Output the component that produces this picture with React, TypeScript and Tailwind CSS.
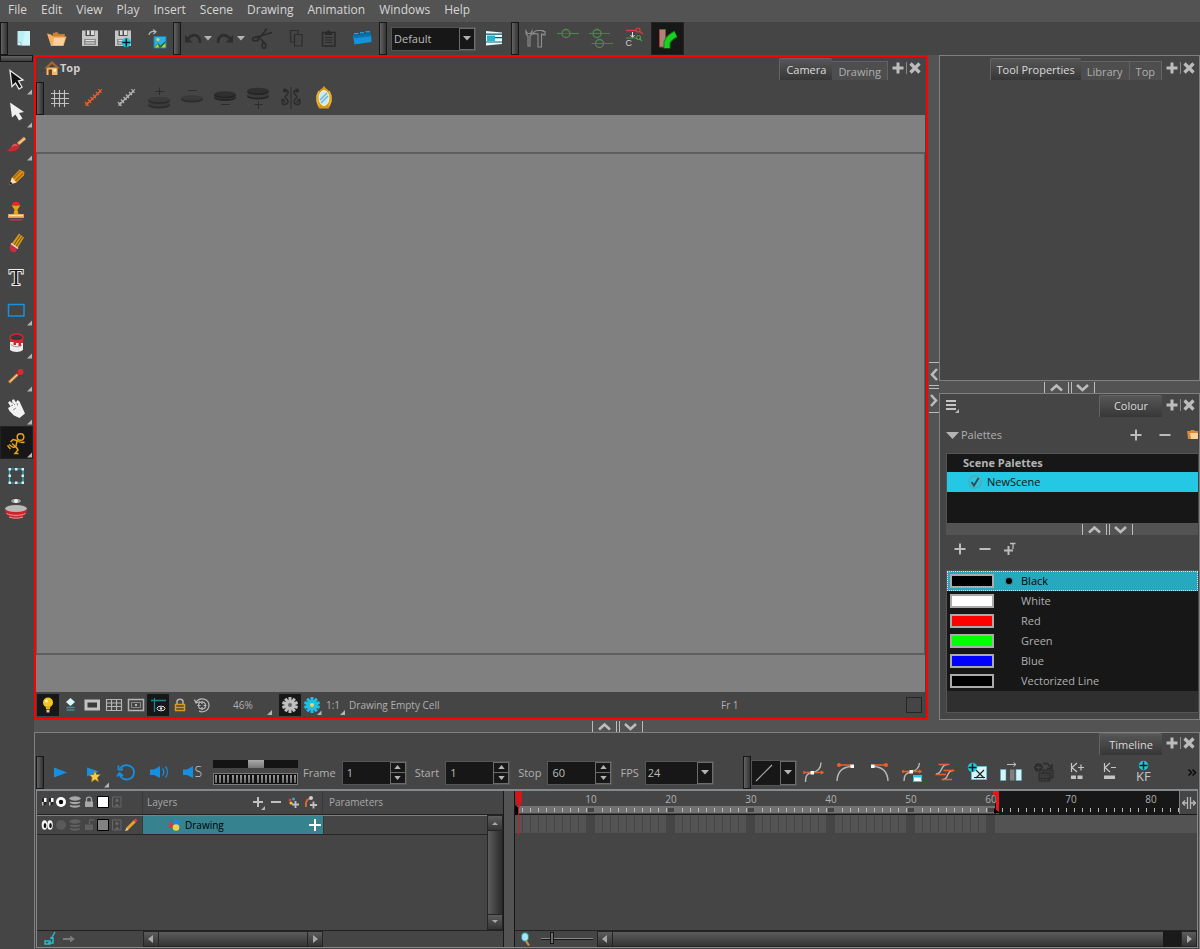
import type { ReactNode } from "react";

type IconDef = { label: string; art: ReactNode; menu?: boolean; active?: boolean };

const MENUS = ["File", "Edit", "View", "Play", "Insert", "Scene", "Drawing", "Animation", "Windows", "Help"];

const COLOURS = [
  { name: "Black", swatch: "bg-black", current: true },
  { name: "White", swatch: "bg-white" },
  { name: "Red", swatch: "bg-[#ff0000]" },
  { name: "Green", swatch: "bg-[#00ff00]" },
  { name: "Blue", swatch: "bg-[#0000ff]" },
  { name: "Vectorized Line", swatch: "bg-black" },
];

const FRAMES = Array.from({ length: 83 }, (_, i) => i + 1);
const LAST_FRAME = 60;

/* ---------- small shared pieces ---------- */

function Grip({ flat = false }: { flat?: boolean }) {
  return flat ? (
    <div className="mb-px h-[7px] w-full shrink-0 border border-[#171717] bg-linear-to-b from-[#636363] to-[#3c3c3c]" />
  ) : (
    <div className="h-[33px] w-2 shrink-0 border border-[#171717] bg-linear-to-r from-[#636363] to-[#343434]" />
  );
}

function ToolButton({ label, art, menu, active }: IconDef) {
  return (
    <button
      type="button"
      aria-label={label}
      title={label}
      className={`size-[33px] shrink-0 ${active ? "border border-[#222222] bg-[#171717]" : ""}`}
    >
      <svg viewBox={active ? "1 1 31 31" : "0 0 33 33"} className="size-full" fill="none">
        {art}
        {menu && <path d="M27 31.5 32 26.5V31.5Z" fill="#b4b4b4" />}
      </svg>
    </button>
  );
}

function StatusButton({ label, art, menu, active }: IconDef) {
  return (
    <button type="button" aria-label={label} className={`size-[22px] shrink-0 ${active ? "bg-[#171717]" : ""}`}>
      <svg viewBox="0 0 22 22" className="size-full" fill="none">
        {art}
        {menu && <path d="M16 21 20.500 16.500V21Z" fill="#b4b4b4" />}
      </svg>
    </button>
  );
}

function Tab({ children, active }: { children: ReactNode; active?: boolean }) {
  return (
    <button
      type="button"
      role="tab"
      aria-selected={!!active}
      className={
        active
          ? "h-[22px] rounded-t-xs border-t border-l border-[#636363] bg-linear-to-b from-[#565656] to-[#373737] px-1.5 text-[11px] text-[#dadada]"
          : "h-[19px] border-t border-r border-[#636363] bg-[#4e4e4e] px-1.5 text-[11px] text-[#b0b0b0]"
      }
    >
      {children}
    </button>
  );
}

function TabControls() {
  return (
    <div className="mb-1 ml-1 flex h-4 items-center gap-0.5">
      <button type="button" aria-label="Add view">
        <svg viewBox="0 0 12 12" className="size-3">
          <path d="M6 .5V11.500M.5 6H11.500" stroke="#bcbcbc" strokeWidth="3" />
        </svg>
      </button>
      <span className="h-3 w-px bg-[#8a8a8a]" />
      <button type="button" aria-label="Close view">
        <svg viewBox="0 0 12 12" className="size-3">
          <path d="M1.500 1.500 10.500 10.500M10.500 1.500 1.500 10.500" stroke="#bcbcbc" strokeWidth="3.200" />
        </svg>
      </button>
    </div>
  );
}

function HSplitter({ className = "" }: { className?: string }) {
  return (
    <div className={`flex shrink-0 items-center justify-center overflow-hidden bg-[#535353] ${className}`}>
      <svg viewBox="0 0 51 11" className="h-[11px] w-[51px]" fill="none" stroke="#bcbcbc">
        <path d="M.5 0V11M24.500 0V11M27.500 0V11M50.500 0V11" strokeWidth="1" />
        <path d="M7 8.500 12.500 3.500 18 8.500M33 3 38.500 8 44 3" strokeWidth="2.600" />
      </svg>
    </div>
  );
}

function VSplitter() {
  return (
    <div className="flex w-[11px] shrink-0 items-center justify-center bg-[#535353]">
      <svg viewBox="0 0 10 51" className="h-[51px] w-[10px]" fill="none" stroke="#bcbcbc">
        <path d="M0 .5H10M0 23.500H10M0 26.500H10M0 50.500H10" strokeWidth="1" />
        <path d="M8 7 3 12.500 8 18M2 33 7 38.500 2 44" strokeWidth="2.600" />
      </svg>
    </div>
  );
}

function Caret() {
  return (
    <svg viewBox="0 0 8 5" className="h-[5px] w-2">
      <path d="M0 0H8L4 4.500Z" fill="#b4b4b4" />
    </svg>
  );
}

function Select({ label, options, width, height, children }: {
  label: string; options: string[]; width: string; height: string; children?: ReactNode;
}) {
  return (
    <div className={`relative shrink-0 border border-[#555555] bg-[#171717] ${width} ${height}`}>
      <select aria-label={label} className="size-full appearance-none bg-transparent pl-0.5 text-[11px] text-[#bcbcbc] outline-none">
        {options.map((o) => (
          <option key={o}>{o}</option>
        ))}
      </select>
      {children}
      <span className="pointer-events-none absolute inset-y-0 right-0 flex w-4 items-center justify-center border border-[#6c6c6c]">
        <Caret />
      </span>
    </div>
  );
}

function Spinner({ label, value, id }: { label: string; value: string; id: string }) {
  return (
    <div className="flex shrink-0 items-center gap-1.5 pr-2">
      <label htmlFor={id} className="text-[11px] text-[#b0b0b0]">{label}</label>
      <div className="flex h-6 w-[65px] border border-[#555555] bg-[#171717]">
        <input id={id} defaultValue={value} className="w-full min-w-0 bg-transparent pl-1 text-[11px] text-[#bcbcbc] outline-none" />
        <div className="flex w-4 shrink-0 flex-col">
          <button type="button" aria-label={`${label} up`} className="flex flex-1 items-center justify-center border border-[#6c6c6c]">
            <svg viewBox="0 0 8 5" className="h-1 w-[7px]"><path d="M0 5H8L4 0Z" fill="#b4b4b4" /></svg>
          </button>
          <button type="button" aria-label={`${label} down`} className="flex flex-1 items-center justify-center border border-t-0 border-[#6c6c6c]">
            <svg viewBox="0 0 8 5" className="h-1 w-[7px]"><path d="M0 0H8L4 5Z" fill="#b4b4b4" /></svg>
          </button>
        </div>
      </div>
    </div>
  );
}

/* ---------- icon artwork ---------- */

const floppy = (
  <g>
    <path d="M8 8.500H24V24H8Z" fill="#c6c6c6" />
    <path d="M11.500 8.500H20.500V14H11.500Z" fill="#4d4d4d" />
    <path d="M13 8.500H15.500V13H13ZM17 8.500H20V13H17Z" fill="#dedede" />
    <path d="M10 17H22V23H10Z" fill="#8d8d8d" />
    <path d="M11.500 18.500H20.500M11.500 21H20.500" stroke="#e2e2e2" strokeWidth="1.200" />
  </g>
);

function CyanPlus({ x, y }: { x: number; y: number }) {
  return (
    <g>
      <circle cx={x} cy={y} r="4.700" fill="#20cbe0" />
      <path d={`M${x - 4} ${y}H${x + 4}M${x} ${y - 4}V${y + 4}`} stroke="#0b1c20" strokeWidth="1.500" />
    </g>
  );
}

const FILE_TOOLS: IconDef[] = [
  {
    label: "New",
    art: (
      <g>
        <path d="M9.500 9H22V23.500H13L9.500 20.500Z" fill="#b9eef5" />
        <path d="M17 9H22V23.500H14Z" fill="#d9f8fb" opacity=".7" />
        <path d="M9.500 20 12.500 20.500 13.500 23.500 9.500 23Z" fill="#eefcff" stroke="#6a98a0" strokeWidth=".6" />
      </g>
    ),
  },
  {
    label: "Open",
    art: (
      <g>
        <path d="M10 22 12 11 16 10 18 12H24L22 23Z" fill="#c97f31" />
        <path d="M6 11.500 10 12.500 12 14.500H25.500L22.500 24H10Z" fill="#f3b062" />
        <path d="M13 16H24L22 23H12Z" fill="#fbd09a" />
      </g>
    ),
  },
  { label: "Save", art: floppy },
  { label: "Save as new version", art: <g>{floppy}<CyanPlus x={19.300} y={20.500} /></g> },
  {
    label: "Import images",
    art: (
      <g>
        <path d="M14 14.500H26V26H14Z" fill="#29b2ea" stroke="#1c7fb4" />
        <path d="M14.500 25.500 18 21 20.500 23.500 25.500 19V25.500Z" fill="#2e6b2b" />
        <path d="M14.500 25.500 18 22 19 25.500ZM21 25.500 25.500 21V25.500Z" fill="#b5d84a" />
        <circle cx="18" cy="17.500" r="1.500" fill="#f4cf3b" />
        <path d="M9 13C9.500 10 12 9 15.500 9.500M13 7.500 16 9.800 13.500 12" stroke="#b8b8b8" strokeWidth="1.200" />
      </g>
    ),
  },
];

const EDIT_TOOLS: IconDef[] = [
  {
    label: "Cut",
    art: (
      <g stroke="#2b2b2b" strokeWidth="1.600">
        <path d="M11 18 20 6.500M8 15.500 25 10.500M14 17 18 22" />
        <ellipse cx="8.500" cy="17" rx="3" ry="1.800" />
        <ellipse cx="17" cy="23.500" rx="1.800" ry="2.800" />
      </g>
    ),
  },
  {
    label: "Copy",
    art: (
      <g stroke="#2c2c2c" strokeWidth="1.200" fill="#444444">
        <path d="M10.500 8.500H18V20H10.500Z" />
        <path d="M14.500 12.500H22V24H14.500Z" />
      </g>
    ),
  },
  {
    label: "Paste",
    art: (
      <g>
        <path d="M9.500 10.500H22V24H9.500Z" stroke="#2a2a2a" strokeWidth="1.500" />
        <path d="M12 11 15.500 8 19 11V13H12Z" fill="#2a2a2a" />
        <path d="M12 15.500H19.500M12 18H19.500M12 20.500H19.500" stroke="#2a2a2a" />
      </g>
    ),
  },
  {
    label: "Plug-ins",
    art: (
      <g>
        <path d="M7 13.500 25 12 25.500 20 8.500 22.500Z" fill="#1095dd" />
        <path d="M7 13.500 25 12 25.200 14.500 7.500 16.500Z" fill="#0b79b8" />
        <path d="M8 11H12.500V14.500H8ZM14 10.500H18V14H14ZM19.500 9.500H24V13.500H19.500Z" fill="#0a6ba6" />
        <path d="M8 11.500H12.500M14 10.700H18M19.500 9.700H24" stroke="#2aa5e8" />
      </g>
    ),
  },
];

const DEFORM_TOOLS: IconDef[] = [
  {
    label: "Rigging tools",
    art: (
      <g stroke="#909090" strokeWidth="1.100">
        <path d="M7 9V12L9 14V24H11V14L13 12V9L11.500 11.500H8.500Z" />
        <path d="M14 12C15 9.500 17 8.500 19 8.500H24V9.500H26V13H24V12H22.500V25H19V12C17 11.500 15.500 11.500 14 12Z" />
      </g>
    ),
  },
  { label: "Add deformation", art: <g stroke="#4d8a4a"><path d="M5 11.500H10M18 11.500H27" /><circle cx="14" cy="11.500" r="4" strokeWidth="1.300" /><path d="M10 11.500H18" opacity=".5" /></g> },
  {
    label: "Add deformation chain",
    art: (
      <g stroke="#4d8a4a">
        <path d="M4 11.500H25M6.500 21.500H28" opacity=".85" />
        <circle cx="12" cy="11.500" r="4" strokeWidth="1.300" />
        <circle cx="14.500" cy="21.500" r="4" strokeWidth="1.300" />
      </g>
    ),
  },
  {
    label: "Copy resting position",
    art: (
      <g>
        <path d="M8 8.500H18M21 9 25 12" stroke="#dc3b3b" strokeWidth="1.300" />
        <circle cx="20" cy="8" r="2" stroke="#dc3b3b" strokeWidth="1.200" />
        <path d="M14.500 10V15M12.500 13 14.500 15.500 16.500 13" stroke="#dedede" />
        <path d="M8 16H18M21.500 16.500 24 19" stroke="#4d9a4a" strokeWidth="1.200" />
        <circle cx="20.500" cy="15.500" r="2" stroke="#4d9a4a" strokeWidth="1.200" />
        <text x="7.500" y="24" fill="#d0d0d0" fontSize="9" fontFamily="Liberation Sans, sans-serif">C</text>
      </g>
    ),
  },
  {
    label: "Show deformed drawing",
    active: true,
    art: (
      <g>
        <path d="M8.500 7.500H14.500V25H8.500Z" fill="#a98480" stroke="#b23a2a" />
        <path d="M16 26.500V20.500C17 17.500 20 14.500 25 12" stroke="#0f8a12" strokeWidth="7" />
        <path d="M16 26V20.500C17 17.500 20 14.500 24.500 12.300" stroke="#1bd022" strokeWidth="5" />
      </g>
    ),
  },
];

function Discs({ ys, dim = true }: { ys: number[]; dim?: boolean }) {
  return (
    <g>
      {ys.map((y, i) => (
        <g key={y}>
          <ellipse cx="16" cy={y + 1.200} rx="11" ry="3.300" fill={dim ? "#2b2b2b" : "#242424"} />
          <ellipse cx="16" cy={y} rx="10.500" ry="2.800" fill={dim || i === 0 ? "#3a3a3a" : "#2f2f2f"} />
        </g>
      ))}
    </g>
  );
}

function RulerArt({ colour }: { colour: string }) {
  return (
    <g stroke={colour}>
      <path d="M9 23 24 8.500" strokeWidth="1.400" />
      <path d="M8 20 11.500 24M11 17.500 14 21M13.500 15 16.500 18M16 12.500 19 16M19 10 22 13M21.500 7 24.500 11" strokeWidth="1.200" />
      <path d="M8.500 24 11 20M21.500 11 25 7" strokeWidth="1" />
    </g>
  );
}

const CAMERA_TOOLS: IconDef[] = [
  { label: "Show grid", art: <path d="M10.500 8V25M15.500 8V25M20.500 8V25M7 11.500H25M7 16.500H25M7 21.500H25" stroke="#c2c2c2" strokeWidth="1.100" /> },
  { label: "Ruler", art: <RulerArt colour="#e8622c" /> },
  { label: "Ruler off", art: <RulerArt colour="#b5b5b5" /> },
  { label: "Previous drawing more", art: <g><Discs ys={[22, 17.500]} /><path d="M16.500 5.500V13M12.500 9.500H20.500" stroke="#2d2d2d" /></g> },
  { label: "Previous drawing less", art: <g><Discs ys={[16]} /><path d="M12 8.500H21" stroke="#2d2d2d" /></g> },
  { label: "Next drawing less", art: <g><Discs ys={[14.500, 12]} dim={false} /><path d="M12 22.500H21" stroke="#2d2d2d" /></g> },
  { label: "Next drawing more", art: <g><Discs ys={[13, 8.500]} dim={false} /><path d="M16.500 19V27M12.500 22.500H20.500" stroke="#2d2d2d" /></g> },
  {
    label: "Flip",
    art: (
      <g stroke="#2b2b2b" strokeWidth="1.600">
        <path d="M16 5V27" strokeWidth="1" />
        <circle cx="10" cy="8.500" r="1.300" fill="#2b2b2b" />
        <circle cx="22" cy="8.500" r="1.300" fill="#2b2b2b" />
        <path d="M10 8.500C14 8 14 11 11 13.500S14 17 13 20 7 24 7 19.500 10 18.500 9.500 20.500M22 8.500C18 8 18 11 21 13.500S18 17 19 20 25 24 25 19.500 22 18.500 22.500 20.500" />
      </g>
    ),
  },
  {
    label: "Mirror view",
    art: (
      <g>
        <path d="M16 4 18 6.500C24 9 24 23 20.500 26.500H11.500C8 23 8 9 14 6.500Z" fill="#d9981a" />
        <path d="M11 9 9 14V19L11 24M21 9 23 14V19L21 24" stroke="#f0b92e" strokeWidth="1.500" />
        <ellipse cx="16" cy="16" rx="5" ry="7.500" fill="#c8ebf6" stroke="#fdf3c7" />
        <path d="M12 18 19 11M13 21 20 14" stroke="#6fb9d8" strokeWidth="1.500" />
      </g>
    ),
  },
];

const TOOLS: IconDef[] = [
  { label: "Select", menu: true, art: <path d="M10 7.500 23 17 18.500 18 22 24 19 26 15.500 20 12 23.500Z" fill="#111111" stroke="#e8e8e8" strokeWidth="1.300" /> },
  { label: "Contour editor", menu: true, art: <path d="M10 6.500 24 16 19 17 22.500 22.500 19 24.500 15.500 18.500 12 21.500Z" fill="#f0f0f0" /> },
  {
    label: "Brush",
    menu: true,
    art: (
      <g>
        <path d="M18 15 25 9" stroke="#e7a55c" strokeWidth="3.200" />
        <path d="M19 14.500 25 9.200" stroke="#fcd7a4" strokeWidth="1" />
        <path d="M6.500 21.500C11 21 10.500 15.500 15 14.500 19 14 21 17.500 18 20 14.500 23 10 23 6.500 21.500Z" fill="#c82a2e" />
        <path d="M12 17.500C13.500 15.500 16 15.500 17 16.500" stroke="#f08080" />
      </g>
    ),
  },
  {
    label: "Pencil",
    art: (
      <g>
        <path d="M9.500 22.500 12 15.500 19.500 7.500 24.500 10 24 13.500 16.500 20.500Z" fill="#d88c14" />
        <path d="M13.500 16 20.500 9M15.500 18.500 23 11.500" stroke="#7d5408" />
        <path d="M9.500 22.500 12 15.500 16.500 20.500Z" fill="#f8dcc0" />
        <path d="M9.500 22.500 10.500 19.500 12.500 21.500Z" fill="#161616" />
      </g>
    ),
  },
  {
    label: "Stamp",
    art: (
      <g>
        <path d="M12 10C12 5.500 20 5.500 20 10Z" fill="#e02b31" />
        <path d="M11.500 10.500H20.500L17.500 14.500 18.500 19H13.500L14.500 14.500Z" fill="#e3a50f" />
        <path d="M8 19H24V23H8Z" fill="#f09a3d" />
        <path d="M9 20.500H23" stroke="#fde2bd" strokeWidth="1.500" />
        <path d="M9.500 24.800H22.500" stroke="#e02b31" strokeWidth="1.500" />
      </g>
    ),
  },
  {
    label: "Eraser",
    art: (
      <g>
        <path d="M11.500 16 19 5.500 24 9.500 17.500 20Z" fill="#d69a1c" />
        <path d="M14 17 20.500 7M16 18.500 22.500 8.500" stroke="#70500c" />
        <path d="M9.500 19 11.500 15.500 17.500 20 15.500 24C12 25 9.500 22.500 9.500 19Z" fill="#cc2d3c" />
        <path d="M11 15.500 18 20.500" stroke="#e6e6e6" strokeWidth="1.500" />
      </g>
    ),
  },
  {
    label: "Text",
    art: (
      <text x="16" y="24" textAnchor="middle" fill="#1a1a1a" stroke="#efefef" strokeWidth="2" paintOrder="stroke" fontSize="23" fontFamily="Liberation Serif, serif">
        T
      </text>
    ),
  },
  { label: "Rectangle", menu: true, art: <path d="M8.500 10.500H24V22H8.500Z" stroke="#1593e0" strokeWidth="1.500" /> },
  {
    label: "Paint",
    menu: true,
    art: (
      <g>
        <path d="M10 11H23V23C20 25.500 13 25.500 10 23Z" fill="#ededed" />
        <ellipse cx="16.500" cy="10.500" rx="6.500" ry="3.500" fill="#393939" stroke="#d52530" strokeWidth="1.500" />
        <path d="M10 11.500C13 14.500 20 14.500 23 11.500V16H21V19H18.500V16H16V18H13.500V15H10Z" fill="#d52530" />
        <path d="M10.500 17C13 20 19 21 22 18" stroke="#9a9a9a" />
      </g>
    ),
  },
  {
    label: "Dropper",
    menu: true,
    art: (
      <g>
        <path d="M9 22.500 19 13" stroke="#d98d3f" strokeWidth="3" />
        <path d="M10 21.500 18 14" stroke="#fbe0bb" />
        <path d="M16.500 12 20.500 16" stroke="#9b1b22" strokeWidth="2" />
        <circle cx="20.500" cy="12" r="3" fill="#d42c33" />
      </g>
    ),
  },
  {
    label: "Hand",
    menu: true,
    art: (
      <g>
        <path d="M8 15 10.500 13.500 8 9.500 10 8 12.500 10.500 12 7 14 6.200 16 9.500 17.500 7 19.500 8.500 22.500 15 25 20.500 19.500 25 14 22.500 9.500 18Z" fill="#f1f1f1" />
        <path d="M11 13 13 12M13.500 10.500 15 12M17 10 17.500 12.500M13 17 16 15" stroke="#8b8b8b" />
      </g>
    ),
  },
  {
    label: "Animate",
    menu: true,
    active: true,
    art: (
      <g stroke="#e8a317" strokeWidth="1.500">
        <circle cx="20.500" cy="11" r="3.300" />
        <path d="M24.500 16C21 17.500 19 16 17 14.500L13 13.500 10.500 16M17 15 16 20C14 22.500 12 21 9 18.500M7.500 19.500 10.500 23M12 17.500 16.500 21.500 18 24 15 27.500H18.500" />
      </g>
    ),
  },
  {
    label: "Transform",
    art: (
      <g>
        <path d="M9.500 10H23V24H9.500Z" stroke="#24bccb" strokeWidth="1.200" />
        <path d="M8.500 9H11V11.500H8.500ZM15 9H17.500V11.500H15ZM21.500 9H24V11.500H21.500ZM8.500 15.500H11V18H8.500ZM21.500 15.500H24V18H21.500ZM8.500 22.500H11V25H8.500ZM15 22.500H17.500V25H15ZM21.500 22.500H24V25H21.500Z" fill="#d8eef0" />
      </g>
    ),
  },
  {
    label: "Onion skin",
    art: (
      <g>
        <ellipse cx="16" cy="9" rx="5.500" ry="2.800" fill="#9a9a9a" stroke="#3a3a3a" />
        <circle cx="16" cy="9" r="2" fill="#eeeeee" />
        <path d="M5 17C5 30 27 30 27 17Z" fill="#c9242c" />
        <path d="M6.500 21.500C11 24 21 24 25.500 21.500M9 25C13 26.500 19 26.500 23 25" stroke="#f19a9a" />
        <ellipse cx="16" cy="16.500" rx="11" ry="3.500" fill="#b9b9b9" />
      </g>
    ),
  },
];

const speaker = <path d="M7 13.500H11L17 10V22L11 19H7Z" fill="#168fe0" />;

const PLAY_TOOLS: IconDef[] = [
  { label: "Play", art: <path d="M10 11.500 23 16.500 10 21.500Z" fill="#168fe0" /> },
  {
    label: "Render and play",
    menu: true,
    art: (
      <g>
        <path d="M10 11.500 22 15.500 10 20.500Z" fill="#168fe0" />
        <path d="M18 14.500 19.500 18.500 23.500 18.500 20.500 21.500 21.500 26 18 23.500 14.500 26 15 21.500 12.500 18.800 16.500 18.500Z" fill="#f6cd48" stroke="#a06a10" strokeWidth=".6" />
      </g>
    ),
  },
  { label: "Loop", art: <path d="M10.500 12C15 6.500 24 9.500 24 16.500 23.500 25 12 26 9.500 18M8.500 9.500V13.500H13M7 20.500 9.500 17 13 20" stroke="#168fe0" strokeWidth="1.800" /> },
  { label: "Sound", art: <g>{speaker}<path d="M19.500 12.500C21 14.500 21 17.500 19.500 19.500M22.500 10.500C25 14 25 18.500 22.500 21.500" stroke="#168fe0" strokeWidth="1.300" /></g> },
  { label: "Sound scrubbing", art: <g>{speaker}<text x="18.500" y="21" fill="#c8c8c8" fontSize="14" fontWeight="300" fontFamily="Open Sans, sans-serif">S</text></g> },
];

const KEY_TOOLS: IconDef[] = [
  {
    label: "Ease",
    art: (
      <g>
        <path d="M8.500 26C8.500 20 9.500 17.500 15 16.500S24 12 24 6.500" stroke="#b8b8b8" strokeWidth="1.400" />
        <path d="M6.500 16.500H26M7 15V18M24 15 26 16.500 24 18" stroke="#e8622c" strokeWidth="1.400" />
        <path d="M13.500 15H17V18.500H13.500Z" fill="#ffffff" />
      </g>
    ),
  },
  {
    label: "Ease in",
    art: (
      <g>
        <path d="M7 25C7.500 16 12 11 21 10.500" stroke="#b8b8b8" strokeWidth="1.400" />
        <path d="M9 9H21" stroke="#e8622c" strokeWidth="1.500" />
        <circle cx="9" cy="9" r="2" fill="#e8622c" />
        <path d="M20.500 8.500H24V12H20.500Z" fill="#ffffff" />
      </g>
    ),
  },
  {
    label: "Ease out",
    art: (
      <g>
        <path d="M25 25C24.500 16 20 11 11 10.500" stroke="#b8b8b8" strokeWidth="1.400" />
        <path d="M11 9H23" stroke="#e8622c" strokeWidth="1.500" />
        <circle cx="23" cy="9" r="2" fill="#e8622c" />
        <path d="M8 8.500H11.500V12H8Z" fill="#ffffff" />
      </g>
    ),
  },
  {
    label: "Set ease",
    art: (
      <g>
        <path d="M8 25C8 19 10 17 15 16S23 12 23.500 7" stroke="#b8b8b8" strokeWidth="1.400" />
        <path d="M6 15.500H25M7 14V17M23 14 25 15.500 23 17" stroke="#e8622c" strokeWidth="1.400" />
        <path d="M13.500 14H17V17.500H13.500Z" fill="#ffffff" />
        <path d="M17 19H26V26H17Z" fill="#20cbe0" />
        <path d="M18 21.500H25V25H18Z" fill="#ffffff" />
      </g>
    ),
  },
  {
    label: "Flatten",
    art: (
      <g>
        <path d="M7 18C14 18 11 8.500 18 8.500M14 23.500C20 23.500 17 14.500 24 14.500" stroke="#b8b8b8" strokeWidth="1.400" />
        <path d="M9.500 8.500H20.500M14.500 14.500H25.500M6.500 18.500H17M12.500 23.500H23" stroke="#e8622c" strokeWidth="1.400" />
      </g>
    ),
  },
  {
    label: "Add keyframe exposure",
    art: (
      <g>
        <path d="M9.500 10.500H24.500V23.500H9.500Z" fill="#d6f5fa" stroke="#6fc0cf" />
        <path d="M14 14 22 22M22 14 14 22M12 21.500H23" stroke="#222222" strokeWidth="1.200" />
        <CyanPlus x={10.500} y={11.500} />
      </g>
    ),
  },
  {
    label: "Stretch exposure",
    art: (
      <g>
        <path d="M12 8.500H21M18.500 6.500 21 8.500 18.500 10.500" stroke="#c0c0c0" />
        <path d="M5.500 13.500H11V24.500H5.500Z" fill="#d6f5fa" stroke="#5fb0bf" strokeWidth=".7" />
        <path d="M11.500 13.500H15V24.500H11.500Z" fill="#4a4a4a" />
        <path d="M15 13.500H19.500V24.500H15Z" fill="#808080" />
        <path d="M21 13.500H26.500V24.500H21Z" fill="#d6f5fa" stroke="#5fb0bf" strokeWidth=".7" />
      </g>
    ),
  },
  {
    label: "Duplicate drawing",
    art: (
      <g>
        <path d="M15 14H25V22H15Z" fill="#3b3b3b" stroke="#2b2b2b" />
        <path d="M11 17H22V25H11Z" fill="#3b3b3b" stroke="#2b2b2b" />
        <path d="M13 22.500H21" stroke="#222222" strokeDasharray="2 1" />
        <circle cx="10.500" cy="11.500" r="4.300" fill="#2c2c2c" />
        <path d="M8 11.500H13M10.500 9V14" stroke="#444444" />
        <path d="M15 7.500H19L24 12M24 8V12.500H19" stroke="#2b2b2b" strokeWidth="1.500" />
      </g>
    ),
  },
  {
    label: "Add keyframe",
    art: (
      <g>
        <path d="M10.500 7V16M16 7 11 11.500 16 16M17 11.500H23M20 8.500V14.500" stroke="#c4c4c4" strokeWidth="1.200" />
        <path d="M10 19.500H15V23H10ZM16.500 19.500H21.500V23H16.500Z" fill="#c4c4c4" />
      </g>
    ),
  },
  {
    label: "Delete keyframe",
    art: (
      <g>
        <path d="M10.500 7V16M16 7 11 11.500 16 16M17 11.500H22" stroke="#c4c4c4" strokeWidth="1.200" />
        <path d="M10 19.500H21V23H10Z" fill="#c4c4c4" />
      </g>
    ),
  },
  {
    label: "Keyframe mode",
    art: (
      <g>
        <text x="9" y="25" fill="#c4c4c4" fontSize="13" fontFamily="Open Sans, sans-serif">KF</text>
        <CyanPlus x={16.500} y={9.500} />
      </g>
    ),
  },
];

function Gear({ colour, centre }: { colour: string; centre: string }) {
  return (
    <g>
      <circle cx="11" cy="11" r="5" fill={colour} />
      {[0, 36, 72, 108, 144].map((a) => (
        <path key={a} d="M11 3V19" stroke={colour} strokeWidth="3" transform={`rotate(${a} 11 11)`} />
      ))}
      <circle cx="11" cy="11" r="2" fill={centre} />
    </g>
  );
}

const STATUS_LEFT: IconDef[] = [
  {
    label: "Light table",
    active: true,
    art: (
      <g>
        <circle cx="11" cy="8.500" r="5" fill="#f5c71e" />
        <path d="M8.500 12H13.500L12.800 15.500H9.200Z" fill="#e8b010" />
        <circle cx="9.500" cy="7" r="1.500" fill="#fff3b0" />
        <path d="M9.500 16H12.500V18.500H9.500Z" fill="#c9c9c9" />
      </g>
    ),
  },
  { label: "Auto light table", art: <g><path d="M11.500 4 16 8 11.500 12 7 8Z" fill="#d8f3fa" /><path d="M7.500 13.500H15.500M7.500 16H15.500" stroke="#4a8a96" strokeWidth="1.300" /></g> },
  { label: "Camera mask", art: <g><path d="M3.500 5.500H19V16.500H3.500Z" fill="#c2c2c2" /><path d="M6.500 8.500H16V13.500H6.500Z" fill="#3a3a3a" /></g> },
  { label: "Outline grid", art: <path d="M3.500 5.500H18.500V16.500H3.500ZM3.500 9H18.500M3.500 12.500H18.500M8.500 5.500V16.500M13.500 5.500V16.500" stroke="#b4b4b4" strokeWidth="1.200" /> },
  { label: "Safe area", art: <g stroke="#b4b4b4"><path d="M3.500 5.500H18.500V16.500H3.500Z" strokeWidth="1.500" /><path d="M6.500 8.500H15.500V13.500H6.500Z" stroke="#8a8a8a" /><path d="M10 11H12" strokeWidth="2" /></g> },
  {
    label: "Show current",
    active: true,
    art: (
      <g>
        <path d="M7.500 4V18M4 6.500H19" stroke="#1e8492" strokeWidth="1.300" />
        <ellipse cx="14" cy="14.500" rx="4" ry="2.300" stroke="#d8d8d8" />
        <circle cx="14" cy="14.500" r="1.300" fill="#d8d8d8" />
      </g>
    ),
  },
  { label: "Lock", art: <g><path d="M8 11V7.500C8 4.500 14 4.500 14 7.500V11" stroke="#b4b4b4" strokeWidth="1.500" /><path d="M6.500 10.500H15.500V16.500H6.500ZM6.500 13.500H15.500" stroke="#d99a17" strokeWidth="1.500" /></g> },
  {
    label: "Reset rotation",
    art: (
      <g stroke="#b8b8b8" strokeWidth="1.200">
        <path d="M5 8C9 2.500 18 4.500 18 11.500 17.500 17 12 19 8 17" />
        <path d="M3.500 5.500 5 9 9 7.500" />
        <circle cx="11" cy="11.500" r="3.500" />
        <path d="M11 7V10M11 13V16M6.500 11.500H9.500M12.500 11.500H15.500" />
      </g>
    ),
  },
];

/* Column glyphs shared by the layer header and each layer row. */
function LayerIcons({ on }: { on: boolean }) {
  const c = on ? "#a8a8a8" : "#606060";
  return (
    <svg viewBox="0 0 100 18" className="h-[18px] w-[100px]" fill="none">
      {on ? (
        <g>
          <path d="M2 6.500C2 4.500 6 4.500 6.500 6.500V9C6 12 3 14 2 12ZM9 6.500C9 4.500 13 4.500 13.500 6.500V9C13 12 10 14 9 12Z" fill="#222222" />
          <path d="M4 5H6.500V9H4ZM11 5H13.500V9H11Z" fill="#ffffff" />
          <path d="M2 9H3.500V12.500H2ZM9 9H10.500V12.500H9Z" fill="#c8c8c8" />
          <circle cx="21" cy="9" r="5" fill="#ffffff" />
          <circle cx="21" cy="9" r="2.200" fill="#0a0a0a" />
        </g>
      ) : (
        <g>
          <ellipse cx="4.500" cy="9" rx="2.800" ry="4.800" fill="#f4f4f4" />
          <ellipse cx="10" cy="9" rx="2.800" ry="4.800" fill="#f4f4f4" />
          <ellipse cx="5" cy="9.500" rx="1.300" ry="2.600" fill="#111111" />
          <ellipse cx="10.500" cy="9.500" rx="1.300" ry="2.600" fill="#111111" />
          <circle cx="21" cy="9" r="5" fill="#5a5a5a" />
        </g>
      )}
      <path d="M30 5.500C32 7.500 38 7.500 40 5.500 38 3.500 32 3.500 30 5.500ZM30 9C32 11 38 11 40 9M30 12.500C32 14.500 38 14.500 40 12.500" fill={c} stroke={c} strokeWidth="1.500" />
      <path d="M45 8.500H53V14H45Z" fill={c} />
      <path d={on ? "M46.500 9V6C46.500 3.500 51.500 3.500 51.500 6V9" : "M49.500 8.500V5C49.500 3 53.500 3 53.500 5"} stroke={c} strokeWidth="1.300" />
      <path d="M57.500 3.500H68.500V14.500H57.500Z" fill={on ? "#ffffff" : "#828282"} stroke="#000000" />
      <path d="M72.500 4H81V14H72.500Z" stroke="#666666" />
      <path d="M75 13.500C75 10 79 10 79 13.500Z" fill="#666666" />
      <circle cx="77" cy="7.500" r="1.700" fill="#666666" />
      {!on && (
        <g>
          <path d="M87 13 95 5" stroke="#e9a22b" strokeWidth="3" />
          <path d="M94.500 5.500 96.500 3.500" stroke="#d94040" strokeWidth="3" />
          <path d="M85 15 86.500 12 88.500 14Z" fill="#f2e0c8" />
        </g>
      )}
    </svg>
  );
}

/* ---------- panels ---------- */

function MenuBar() {
  return (
    <nav className="flex h-[22px] shrink-0 items-center gap-3.5 bg-[#535353] px-2 pb-0.5 text-xs text-[#d6d6d6]">
      {MENUS.map((m) => (
        <button key={m} type="button">{m}</button>
      ))}
    </nav>
  );
}

function History({ label, flip }: { label: string; flip?: boolean }) {
  return (
    <div className="flex shrink-0 items-center">
      <button type="button" aria-label={label}>
        <svg viewBox="0 0 23 33" className="h-[33px] w-[23px]" fill="none">
          <path d={flip ? "M19 13V20.500H11.500Z" : "M4 13V20.500H11.500Z"} fill="#2d2d2d" />
          <path d={flip ? "M4 21C4 13 10 10.500 16 16.500" : "M19 21C19 13 13 10.500 7 16.500"} stroke="#2d2d2d" strokeWidth="2.600" />
        </svg>
      </button>
      <button type="button" aria-label={`${label} history`} className="w-[10px]"><Caret /></button>
    </div>
  );
}

function MainToolbar() {
  return (
    <div className="flex h-[33px] shrink-0 items-center">
      <Grip />
      {FILE_TOOLS.map((t) => <ToolButton key={t.label} {...t} />)}
      <Grip />
      <History label="Undo" />
      <History label="Redo" flip />
      {EDIT_TOOLS.map((t) => <ToolButton key={t.label} {...t} />)}
      <Grip />
      <div className="pr-0.5 pl-1">
        <Select label="Workspace" options={["Default"]} width="w-[85px]" height="h-6" />
      </div>
      <ToolButton
        label="Workspace manager"
        art={
          <g>
            <path d="M8 9 24 10.500V22L8 23.500Z" fill="#e8fbff" />
            <path d="M9 13.500H17V19H9Z" fill="#20b8d0" />
            <path d="M8 12.200H24M17 15.700H24M8 20H24" stroke="#125a68" strokeWidth="1.200" />
          </g>
        }
      />
      <Grip />
      {DEFORM_TOOLS.map((t) => <ToolButton key={t.label} {...t} />)}
    </div>
  );
}

function Toolbox() {
  return (
    <aside className="flex w-[34px] shrink-0 flex-col pr-px">
      <Grip flat />
      {TOOLS.map((t) => <ToolButton key={t.label} {...t} />)}
    </aside>
  );
}

function CameraView() {
  return (
    <section className="flex min-w-0 flex-1 flex-col border-2 border-[#ff0000] bg-[#454545]">
      <header className="flex h-[25px] shrink-0 justify-between">
        <div className="flex items-center pb-1 pl-2 text-[11px] font-bold text-[#cfcfcf]">
          <svg viewBox="0 0 16 16" className="size-4">
            <path d="M2.500 7.500H13.500V15H2.500Z" fill="#f6b76e" />
            <path d="M0 8.500 8 1 16 8.500H13L8 4 3 8.500Z" fill="#a3682a" />
            <path d="M4.500 9.500H8V15H4.500Z" fill="#6b4216" />
            <path d="M9.500 9H12V11.500H9.500Z" fill="#fff0d8" />
          </svg>
          Top
        </div>
        <div className="flex h-[23px] items-end pr-[5px]" role="tablist">
          <Tab active>Camera</Tab>
          <Tab>Drawing</Tab>
          <TabControls />
        </div>
      </header>
      <div className="flex h-[33px] shrink-0">
        <Grip />
        {CAMERA_TOOLS.map((t) => <ToolButton key={t.label} {...t} />)}
      </div>
      <div className="mr-px flex min-h-0 flex-1 flex-col bg-[#808080] py-[37px]">
        <div className="flex-1 border-x border-y-2 border-[#5e5e5e]" />
      </div>
      <footer className="flex h-[26px] shrink-0 items-center pl-px text-[10px] text-[#b0b0b0]">
        {STATUS_LEFT.map((t) => <StatusButton key={t.label} {...t} />)}
        <button type="button" className="flex h-[22px] w-[66px] items-center justify-between pr-[7px] pl-5">
          46%
          <svg viewBox="0 0 5 22" className="h-[22px] w-[5px]"><path d="M0 21 5 16V21Z" fill="#b4b4b4" /></svg>
        </button>
        <StatusButton label="OpenGL view" active art={<Gear colour="#c0c0c0" centre="#6a6a6a" />} />
        <StatusButton label="Render view" menu art={<Gear colour="#20bfe4" centre="#f6d64a" />} />
        <button type="button" className="flex h-[22px] items-center pl-[3px]">
          1:1
          <svg viewBox="0 0 5 22" className="h-[22px] w-[5px]"><path d="M0 21 5 16V21Z" fill="#b4b4b4" /></svg>
        </button>
        <span className="pl-1">Drawing Empty Cell</span>
        <span className="ml-auto w-[185px]">Fr 1</span>
        <span className="mr-1 size-4 border border-[#252525]" />
      </footer>
    </section>
  );
}

function ToolProperties() {
  return (
    <section className="h-[326px] shrink-0 border border-[#808080] bg-[#454545]">
      <div className="flex h-6 items-end justify-end pr-1" role="tablist">
        <Tab active>Tool Properties</Tab>
        <Tab>Library</Tab>
        <Tab>Top</Tab>
        <TabControls />
      </div>
    </section>
  );
}

function Plus() {
  return (
    <svg viewBox="0 0 12 12" className="size-3"><path d="M6 .5V11.500M.5 6H11.500" stroke="#bcbcbc" strokeWidth="2" /></svg>
  );
}

function Minus() {
  return (
    <svg viewBox="0 0 12 12" className="size-3"><path d="M.5 6H11.500" stroke="#bcbcbc" strokeWidth="2" /></svg>
  );
}

function ColourView() {
  return (
    <section className="flex min-h-0 flex-1 flex-col border border-[#808080] bg-[#454545] text-xs">
      <header className="flex h-[23px] shrink-0 items-center justify-between pr-1 pl-1.5">
        <button type="button" aria-label="View menu">
          <svg viewBox="0 0 14 16" className="h-4 w-[14px]">
            <path d="M0 3H10M0 7H10M0 11H10" stroke="#c4c4c4" strokeWidth="2" />
            <path d="M9 15 13 11V15Z" fill="#b4b4b4" />
          </svg>
        </button>
        <div className="flex h-[22px] items-end" role="tablist">
          <div className="flex w-[63px] flex-col"><Tab active>Colour</Tab></div>
          <TabControls />
        </div>
      </header>
      <div className="flex h-9 shrink-0 items-center overflow-hidden pl-1.5 text-[11px] text-[#b0b0b0]">
        <svg viewBox="0 0 13 7" className="mr-0.5 h-[7px] w-[13px]"><path d="M0 0H13L6.500 7Z" fill="#b4b4b4" /></svg>
        Palettes
        <button type="button" aria-label="Add palette" className="mr-[17px] ml-auto"><Plus /></button>
        <button type="button" aria-label="Remove palette" className="mr-4"><Minus /></button>
        <button type="button" aria-label="Import palette" className="mr-px">
          <svg viewBox="0 0 11 10" className="h-[10px] w-[11px]">
            <path d="M0 1H3L4 0H7L8 1H11V9H1Z" fill="#d08a3c" />
            <path d="M3 3H11V9H4Z" fill="#fbcf98" />
          </svg>
        </button>
      </div>
      <ul className="mr-px ml-1.5 h-[71px] shrink-0 border border-r-0 border-[#555555] bg-[#171717]">
        <li className="flex h-[18px] items-center pl-4 text-[11px] font-bold text-[#b4b4b4]">Scene Palettes</li>
        <li className="flex h-5 items-center bg-[#24c8e4] pl-5 text-[11px] text-[#101010]">
          <svg viewBox="0 0 16 16" className="mr-1 size-4" fill="none">
            <circle cx="8" cy="8" r="6" stroke="#5fa3b0" strokeWidth="1.500" />
            <path d="M4.500 8 7 11.500 11.500 4" stroke="#2c4a50" strokeWidth="1.800" />
          </svg>
          NewScene
        </li>
      </ul>
      <HSplitter className="mr-px ml-1.5 h-[11px] pl-[71px]" />
      <div className="flex h-[35px] shrink-0 items-center gap-[13px] pb-2 pl-3.5">
        <button type="button" aria-label="Add colour"><Plus /></button>
        <button type="button" aria-label="Remove colour"><Minus /></button>
        <button type="button" aria-label="Add texture">
          <svg viewBox="0 0 12 14" className="h-[14px] w-3" fill="none" stroke="#bcbcbc">
            <path d="M4.500 4V13M0 8.500H9" strokeWidth="2" />
            <path d="M6 1.500H11.500M9 1.500V7" strokeWidth="1.300" />
          </svg>
        </button>
      </div>
      <div className="mr-px mb-1.5 ml-1.5 min-h-0 flex-1 overflow-hidden border border-r-0 border-[#555555] bg-[#2f2f2f]">
        <table className="w-full border-collapse text-left">
          <tbody>
            {COLOURS.map((c) => (
              <tr
                key={c.name}
                className={`h-5 ${c.current ? "bg-[#26a9bf] text-black outline-1 -outline-offset-1 outline-dotted outline-[#cfe8ec]" : "bg-[#171717] text-[#b0b0b0]"}`}
              >
                <td className="w-[59px] p-0 pl-[3px]"><div className={`h-[14px] w-11 border-2 border-[#aaaaaa] ${c.swatch}`} /></td>
                <td className="w-[15px] p-0">{c.current && <div className="size-1.5 rounded-full bg-black ring-1 ring-[#4b7d86]" />}</td>
                <td className="p-0 text-[11px]">{c.name}</td>
              </tr>
            ))}
          </tbody>
        </table>
      </div>
    </section>
  );
}

function TimelineToolbar() {
  return (
    <div className="flex h-[33px] shrink-0 items-center overflow-hidden pl-px">
      <Grip />
      {PLAY_TOOLS.map((t) => <ToolButton key={t.label} {...t} />)}
      <div className="mr-[5px] ml-1 flex w-[85px] shrink-0 flex-col gap-[5px]">
        <div className="flex h-2 justify-center bg-[#141414]"><span className="w-4 bg-linear-to-b from-[#aaaaaa] to-[#777777]" /></div>
        <div className="flex h-3 justify-between border border-[#7b7b7b] bg-[#111111] px-px py-px">
          {Array.from({ length: 20 }, (_, i) => <span key={i} className="w-0.5 bg-linear-to-b from-[#9a9a9a] to-[#666666]" />)}
        </div>
      </div>
      <Spinner label="Frame" value="1" id="frame" />
      <Spinner label="Start" value="1" id="start" />
      <Spinner label="Stop" value="60" id="stop" />
      <span className="mr-1.5 shrink-0 text-[11px] text-[#b0b0b0]">FPS</span>
      <Select label="FPS" options={["24"]} width="w-[69px]" height="h-6" />
      <div className="grow" />
      <Grip />
      <Select label="Tween" options={[""]} width="w-[46px]" height="h-[26px]">
        <svg viewBox="0 0 26 24" className="pointer-events-none absolute top-0 left-0 h-6 w-[26px]"><path d="M4 20 20 4" stroke="#a8a8a8" strokeWidth="1.200" /></svg>
      </Select>
      {KEY_TOOLS.map((t) => <ToolButton key={t.label} {...t} />)}
      <button type="button" aria-label="More tools" className="flex w-[39px] shrink-0 justify-end pr-0.5">
        <svg viewBox="0 0 9 7" className="h-[7px] w-[9px]" fill="none"><path d="M.5 .5 3.500 3.500 .5 6.500M4.500 .5 7.500 3.500 4.500 6.500" stroke="#0c0c0c" strokeWidth="1.500" /></svg>
      </button>
    </div>
  );
}

function ScrollArrow({ dir }: { dir: "left" | "right" | "up" | "down" }) {
  const d = { left: "M6 0V8L1 4Z", right: "M2 0V8L7 4Z", up: "M1 6H7L4 3Z", down: "M1 2H7L4 5Z" }[dir];
  return (
    <button type="button" aria-label={`Scroll ${dir}`} className="flex size-4 shrink-0 items-center justify-center border border-[#252525] bg-linear-to-b from-[#5c5c5c] to-[#353535]">
      <svg viewBox="0 0 8 8" className="size-2"><path d={d} fill="#a8a8a8" /></svg>
    </button>
  );
}

function LayersPane() {
  return (
    <div className="flex w-[466px] shrink-0 flex-col">
      <div className="flex h-6 shrink-0 border-b border-[#222222] text-[10px] text-[#a8a8a8]">
        <div className="flex w-[106px] items-center border-r border-[#393939] pb-px pl-[3px]"><LayerIcons on /></div>
        <div className="flex w-[180px] items-center justify-between border-r border-[#393939] px-1 pb-px">
          Layers
          <svg viewBox="0 0 68 16" className="h-4 w-[68px]" fill="none">
            <path d="M8 3V13M3 8H13M21 8H31" stroke="#c0c0c0" strokeWidth="2" />
            <path d="M11 16 15 12V16Z" fill="#b4b4b4" />
            <circle cx="40" cy="6" r="1.500" fill="#d94040" />
            <circle cx="43.500" cy="5" r="1.500" fill="#36a8e0" />
            <circle cx="41" cy="9" r="1.500" fill="#f0c83a" />
            <path d="M45.500 7V14M42 10.500H49" stroke="#c0c0c0" strokeWidth="1.800" />
            <path d="M56 13C55 7 58 4 62 4" stroke="#d96a35" strokeWidth="1.800" />
            <circle cx="61" cy="4" r="2" fill="#d0d0d0" />
            <path d="M63.500 7.500V14.500M60 11H67" stroke="#c0c0c0" strokeWidth="1.800" />
          </svg>
        </div>
        <div className="flex items-center pb-px pl-[6px]">Parameters</div>
      </div>
      <div className="flex min-h-0 flex-1 border-b border-[#222222]">
        <div className="min-w-0 flex-1">
          <div className="flex h-5 border-y border-t-[#808080] border-b-[#262626]">
            <div className="flex w-[106px] items-center border-r border-[#393939] pl-[3px]"><LayerIcons on={false} /></div>
            <div className="flex w-[180px] items-center bg-[#37828f] pr-0.5 pl-6 text-[10px] text-black">
              <svg viewBox="0 0 14 12" className="mr-1 h-3 w-[14px]">
                <path d="M7 1H13V7H7Z" fill="#1f86d8" />
                <path d="M4 2 8 9H1Z" fill="#dc3545" />
                <circle cx="9" cy="8.500" r="3.300" fill="#f5cf45" />
              </svg>
              Drawing
              <button type="button" aria-label="Expand layer" className="ml-auto">
                <svg viewBox="0 0 12 12" className="size-3"><path d="M6 0V12M0 6H12" stroke="#ffffff" strokeWidth="2" /></svg>
              </button>
            </div>
            <div className="flex-1 border-l border-[#393939]" />
          </div>
        </div>
        <div className="flex w-4 flex-col">
          <ScrollArrow dir="up" />
          <div className="flex-1 border-x border-[#252525] bg-linear-to-r from-[#5c5c5c] to-[#2c2c2c]" />
          <ScrollArrow dir="down" />
        </div>
      </div>
      <div className="flex h-4 shrink-0">
        <svg viewBox="0 0 106 16" className="h-4 w-[106px]" fill="none">
          <path d="M8 10H13V13H8ZM13 7H16V12H11M14 8 18 1" stroke="#24bccb" strokeWidth="1.500" />
          <path d="M26 7H33V4.500L38 8 33 11.500V9H26Z" fill="#7a7a7a" />
        </svg>
        <div className="flex w-[180px]">
          <ScrollArrow dir="left" />
          <div className="flex-1 border-y border-[#252525] bg-linear-to-b from-[#5c5c5c] to-[#353535]" />
          <ScrollArrow dir="right" />
        </div>
      </div>
    </div>
  );
}

function FramesPane() {
  return (
    <div className="flex min-w-0 flex-1 flex-col border-l border-[#171717]">
      <div className="relative flex h-6 shrink-0 border-b border-[#171717] bg-[#171717] text-[10px] text-[#b0b0b0]">
        <div className="flex min-w-0 flex-1 overflow-hidden">
          {FRAMES.map((f) => {
            const inScene = f <= LAST_FRAME;
            const ten = f % 10 === 0;
            return (
              <div key={f} className={`flex w-2 shrink-0 flex-col ${inScene ? "bg-[#454545]" : ""}`}>
                <div className="relative z-10 flex h-[15px] items-center justify-center whitespace-nowrap">{ten && f}</div>
                <div className={`flex h-[7px] items-center justify-end ${inScene ? "bg-[#717171]" : ""}`}>
                  {ten && inScene ? <span className="h-1 w-2 border-x border-[#717171] bg-[#454545]" /> : <span className="h-1 w-px bg-[#b8b8b8]" />}
                </div>
              </div>
            );
          })}
        </div>
        <button type="button" aria-label="Centre on current frame" className="flex w-[18px] shrink-0 items-center justify-center border-l border-[#808080] bg-[#454545]">
          <svg viewBox="0 0 14 14" className="size-[14px]" fill="none" stroke="#b8b8b8" strokeWidth="1.300">
            <path d="M5.500 1V13M8.500 1V13M5 7H.5M3 4.500 .5 7 3 9.500M9 7H13.500M11 4.500 13.500 7 11 9.500" />
          </svg>
        </button>
        <svg viewBox="0 0 8 44" className="absolute top-0 left-0 z-20 h-11 w-2">
          <path d="M0 14V24H4V17Z" fill="#050505" />
          <path d="M0 0H7V11L4 17 1 12Z" fill="#d4151b" />
          <path d="M3.500 16V44" stroke="#d4151b" />
        </svg>
        <svg viewBox="0 0 8 24" className="absolute top-0 left-[478px] z-20 h-6 w-2">
          <path d="M0 0H6V23H3V6L0 3Z" fill="#ee1318" />
          <path d="M1 17 7 22H1Z" fill="#050505" />
        </svg>
      </div>
      <div className="flex h-[18px] shrink-0 overflow-hidden bg-[#535353]">
        {FRAMES.slice(0, LAST_FRAME).map((f) => (
          <span key={f} className={`w-2 shrink-0 border-r border-[#454545] ${f % 10 === 0 ? "bg-[#454545]" : ""}`} />
        ))}
      </div>
      <div className="min-h-0 flex-1" />
      <div className="flex h-[17px] shrink-0 border-t border-[#222222]">
        <svg viewBox="0 0 26 16" className="h-4 w-[26px] shrink-0">
          <ellipse cx="10" cy="6" rx="3.500" ry="4.200" fill="#a8e6f2" stroke="#2a8ca0" />
          <path d="M11 10 14 14.500" stroke="#d58a3e" strokeWidth="2.200" />
        </svg>
        <input
          type="range"
          aria-label="Zoom"
          defaultValue={18}
          className="mr-1 h-4 w-[52px] shrink-0 appearance-none bg-transparent [&::-webkit-slider-runnable-track]:h-[2px] [&::-webkit-slider-runnable-track]:border-b [&::-webkit-slider-runnable-track]:border-[#171717] [&::-webkit-slider-runnable-track]:bg-[#8a8a8a] [&::-webkit-slider-thumb]:-mt-1.5 [&::-webkit-slider-thumb]:h-3 [&::-webkit-slider-thumb]:w-1 [&::-webkit-slider-thumb]:appearance-none [&::-webkit-slider-thumb]:border [&::-webkit-slider-thumb]:border-[#171717] [&::-webkit-slider-thumb]:bg-[#6c6c6c]"
        />
        <ScrollArrow dir="left" />
        <div className="flex-1 border-y border-[#252525] bg-linear-to-b from-[#5c5c5c] to-[#353535]" />
        <div className="w-[18px] bg-[#1a1a1a]" />
        <ScrollArrow dir="right" />
      </div>
    </div>
  );
}

function TimelineView() {
  return (
    <section className="flex h-[217px] shrink-0 flex-col border border-b-0 border-[#808080] bg-[#454545]">
      <div className="flex h-[23px] shrink-0 items-end justify-end pr-1 pb-px" role="tablist">
        <div className="flex w-[63px] flex-col"><Tab active>Timeline</Tab></div>
        <TabControls />
      </div>
      <TimelineToolbar />
      <div className="mr-px mb-px ml-px flex min-h-0 flex-1 border border-t-2 border-[#85888f]">
        <LayersPane />
        <div className="w-[11px] shrink-0 border-l border-[#171717] bg-[#535353]" />
        <FramesPane />
      </div>
    </section>
  );
}

export default function App() {
  return (
    <div className="flex h-screen min-h-[760px] flex-col overflow-hidden bg-[#454545] font-['Open_Sans','Noto_Sans',sans-serif] leading-none">
      <MenuBar />
      <MainToolbar />
      <main className="flex min-h-0 flex-1">
        <Toolbox />
        <div className="flex min-w-0 flex-1 flex-col bg-[#535353]">
          <div className="flex min-h-0 flex-1">
            <CameraView />
            <VSplitter />
            <div className="flex w-[261px] shrink-0 flex-col">
              <ToolProperties />
              <HSplitter className="h-3" />
              <ColourView />
            </div>
          </div>
          <HSplitter className="h-3" />
          <TimelineView />
        </div>
      </main>
    </div>
  );
}
